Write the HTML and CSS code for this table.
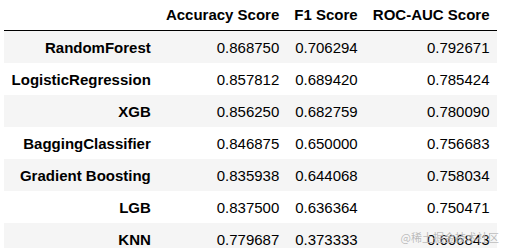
FILE: index.html
```html
<!DOCTYPE html>
<html>
<head>
<meta charset="utf-8">
<link rel="stylesheet" href="styles.css">
</head>
<body>
<div class="frame">
<table class="df">
  <thead>
    <tr><th class="blank"></th><th>Accuracy Score</th><th>F1 Score</th><th>ROC-AUC Score</th></tr>
  </thead>
  <tbody>
    <tr><th>RandomForest</th><td>0.868750</td><td>0.706294</td><td>0.792671</td></tr>
    <tr><th>LogisticRegression</th><td>0.857812</td><td>0.689420</td><td>0.785424</td></tr>
    <tr><th>XGB</th><td>0.856250</td><td>0.682759</td><td>0.780090</td></tr>
    <tr><th>BaggingClassifier</th><td>0.846875</td><td>0.650000</td><td>0.756683</td></tr>
    <tr><th>Gradient Boosting</th><td>0.835938</td><td>0.644068</td><td>0.758034</td></tr>
    <tr><th>LGB</th><td>0.837500</td><td>0.636364</td><td>0.750471</td></tr>
    <tr><th>KNN</th><td>0.779687</td><td>0.373333</td><td>0.606843</td></tr>
  </tbody>
</table>
<div class="watermark">@稀土掘金技术社区</div>
</div>
</body>
</html>
```

FILE: styles.css
```css
html, body {
  margin: 0;
  padding: 0;
  background: #ffffff;
  overflow: hidden;
}
.frame {
  position: relative;
  width: 508px;
  height: 248px;
  padding-left: 4px;
  box-sizing: border-box;
}
.df {
  border-collapse: collapse;
  border-spacing: 0;
  font-family: "Liberation Sans", Arial, sans-serif;
  font-size: 15px;
  color: #000;
  width: 493px;
}
.df th, .df td {
  text-align: right;
  padding: 7.5px 7.5px;
  line-height: 17px;
  white-space: nowrap;
}
.df thead th {
  font-weight: bold;
  padding: 6px 7.5px 7px;
  border-bottom: 1px solid #000;
  vertical-align: bottom;
}
.df tbody th {
  font-weight: bold;
}
.df td {
  font-weight: normal;
}
.df tbody tr:nth-child(odd) {
  background: #f5f5f5;
}
.watermark {
  position: absolute;
  right: 9px;
  top: 230px;
  font-family: "Noto Sans CJK SC", sans-serif;
  font-size: 11px;
  line-height: 14px;
  color: rgba(175, 175, 175, 0.85);
  text-shadow: 0 0 1px rgba(255,255,255,0.6);
}
```
